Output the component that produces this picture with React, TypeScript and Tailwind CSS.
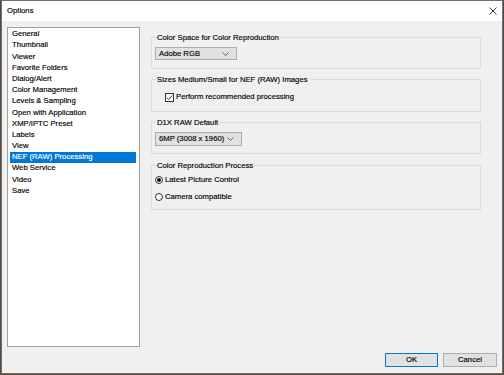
import React from 'react'

const items = [
  'General',
  'Thumbnail',
  'Viewer',
  'Favorite Folders',
  'Dialog/Alert',
  'Color Management',
  'Levels & Sampling',
  'Open with Application',
  'XMP/IPTC Preset',
  'Labels',
  'View',
  'NEF (RAW) Processing',
  'Web Service',
  'Video',
  'Save',
]

function Chevron() {
  return (
    <svg width="7" height="4" viewBox="0 0 7 4" className="shrink-0">
      <path d="M0.5 0.5 L3.5 3.5 L6.5 0.5" fill="none" stroke="#555" strokeWidth="0.9" />
    </svg>
  )
}

function Dropdown({ value, w, h }: { value: string; w: string; h: string }) {
  return (
    <div className={`${w} ${h} flex items-center justify-between pl-[3px] pr-[7px] bg-[#e1e1e1] border border-[#adadad]`}>
      <span>{value}</span>
      <Chevron />
    </div>
  )
}

function Group({ label, h, children, className = '' }: { label: string; h: string; children: React.ReactNode; className?: string }) {
  return (
    <div className={`relative ${h} border border-[#dcdcdc] px-[3px] ${className}`}>
      <span className="absolute -top-[6px] left-[4px] px-[1px] leading-[11px] bg-[#f0f0f0]">{label}</span>
      {children}
    </div>
  )
}

function Radio({ checked, label }: { checked?: boolean; label: string }) {
  return (
    <div className="h-[17px] flex items-center gap-[2px]">
      <span className="w-[8px] h-[8px] rounded-full border border-[#333] bg-white flex items-center justify-center">
        {checked && <span className="w-[4px] h-[4px] rounded-full bg-[#111]" />}
      </span>
      <span>{label}</span>
    </div>
  )
}

export default function App() {
  return (
    <div className="w-[504px] h-[375px] bg-[#5b4a3c] pl-px font-['Liberation_Sans',Arial,sans-serif] text-[7.7px] text-black leading-none [-webkit-text-stroke:0.15px]">
      <div className="w-[502px] h-[374px] border border-[#6e6e6e] bg-[#f0f0f0] flex flex-col">
        {/* Title bar */}
        <div className="h-[20px] shrink-0 bg-white flex items-center justify-between pl-[5px] pr-[5px]">
          <span>Options</span>
          <svg width="8" height="8" viewBox="0 0 8 8">
            <path d="M0.5 0.5 L7.5 7.5 M7.5 0.5 L0.5 7.5" stroke="#222" strokeWidth="0.9" />
          </svg>
        </div>

        {/* Body */}
        <div className="flex pt-[6px] pl-[5px] gap-[11px]">
          <div className="w-[133px] h-[320px] shrink-0 bg-white border border-[#a0a0a0] pt-[0.5px] px-[2px]">
            {items.map((item) => (
              <div
                key={item}
                className={`h-[11.2px] flex items-center pl-[2px] ${
                  item === 'NEF (RAW) Processing' ? 'bg-[#0078d7] text-white mr-[1px]' : ''
                }`}
              >
                {item}
              </div>
            ))}
          </div>

          <div className="w-[330px] pt-[10px] flex flex-col">
            <Group label="Color Space for Color Reproduction" h="h-[32px]" className="pt-[9px]">
              <Dropdown value="Adobe RGB" w="w-[82px]" h="h-[13px]" />
            </Group>
            <Group label="Sizes Medium/Small for NEF (RAW) Images" h="h-[33px]" className="mt-[10px] pt-[12px] pl-[13px]">
              <div className="flex items-center gap-[2px] h-[10px]">
                <span className="w-[9px] h-[9px] border border-[#333] bg-white flex items-center justify-center">
                  <svg width="7" height="7" viewBox="0 0 7 7">
                    <path d="M0.8 3.6 L2.7 5.5 L6.3 1.4" fill="none" stroke="#222" strokeWidth="0.9" />
                  </svg>
                </span>
                <span>Perform recommended processing</span>
              </div>
            </Group>
            <Group label="D1X RAW Default" h="h-[32px]" className="mt-[10px] pt-[9px]">
              <Dropdown value="6MP (3008 x 1960)" w="w-[87px]" h="h-[14px]" />
            </Group>
            <Group label="Color Reproduction Process" h="h-[45px]" className="mt-[11px] pt-[5px]">
              <Radio checked label="Latest Picture Control" />
              <Radio label="Camera compatible" />
            </Group>
          </div>
        </div>

        {/* Footer */}
        <div className="flex justify-end gap-[5px] pt-[6px] pr-[5px]">
          <button className="w-[53px] h-[14px] bg-[#e1e1e1] border border-[#0078d7] flex items-center justify-center">
            OK
          </button>
          <button className="w-[54px] h-[14px] bg-[#e1e1e1] border border-[#adadad] flex items-center justify-center">
            Cancel
          </button>
        </div>
      </div>
    </div>
  )
}
